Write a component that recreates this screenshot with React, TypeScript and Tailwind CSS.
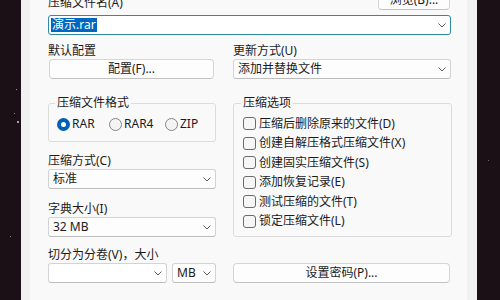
import React from "react";

function Chevron() {
  return (
    <svg width="8" height="5" viewBox="0 0 8 5" className="shrink-0">
      <path d="M0.5 0.5 L4 4 L7.5 0.5" fill="none" stroke="#5f5f5f" strokeWidth="1" />
    </svg>
  );
}

function Select({ value, className }: { value: string; className?: string }) {
  return (
    <div
      className={
        "h-[20px] border border-[#d3d3d3] border-b-[#bdbdbd] rounded-[3px] bg-[#fdfdfd] flex items-center justify-between pl-[4px] pr-[4px] " +
        (className ?? "")
      }
    >
      <span className="leading-[16px]">{value}</span>
      <Chevron />
    </div>
  );
}

function Button({ label, className }: { label: string; className?: string }) {
  return (
    <div
      className={
        "h-[20px] border border-[#d5d5d5] border-b-[#c2c2c2] rounded-[4px] bg-[#fdfdfd] flex items-center justify-center leading-[16px] " +
        (className ?? "")
      }
    >
      {label}
    </div>
  );
}

function Radio({ label, checked, className }: { label: string; checked?: boolean; className?: string }) {
  return (
    <div className={"flex items-center gap-[2px] " + (className ?? "")}>
      {checked ? (
        <div className="w-[13px] h-[13px] rounded-full bg-[#005fb8] flex items-center justify-center">
          <div className="w-[5px] h-[5px] rounded-full bg-white" />
        </div>
      ) : (
        <div className="w-[13px] h-[13px] rounded-full border border-[#858585] bg-[#f4f4f4]" />
      )}
      <span className="leading-[16px]">{label}</span>
    </div>
  );
}

function Check({ label }: { label: string }) {
  return (
    <div className="h-[19.5px] flex items-center gap-[3px]">
      <div className="w-[13px] h-[13px] rounded-[3px] border border-[#6b6b6b] bg-[#f6f6f6]" />
      <span className="leading-[16px]">{label}</span>
    </div>
  );
}

export default function App() {
  const options = [
    "压缩后删除原来的文件(D)",
    "创建自解压格式压缩文件(X)",
    "创建固实压缩文件(S)",
    "添加恢复记录(E)",
    "测试压缩的文件(T)",
    "锁定压缩文件(L)",
  ];

  return (
    <div className="w-[500px] h-[300px] flex bg-[#1a1016] overflow-hidden relative text-[12px] text-[#1b1b1b] font-['Noto_Sans','Noto_Sans_CJK_SC',sans-serif]">
      {/* stars */}
      <div className="absolute left-[17px] top-[121px] w-[2px] h-[2px] rounded-full bg-[#d8d0d8]" />
      <div className="absolute left-[14px] top-[113px] w-[1px] h-[1px] bg-[#8a7f88]" />
      <div className="absolute left-[16px] top-[89px] w-[1px] h-[1px] bg-[#9a909a]" />
      <div className="absolute left-[10px] top-[236px] w-[1px] h-[1px] bg-[#8a7f88]" />
      <div className="absolute left-[488px] top-[160px] w-[1px] h-[1px] bg-[#6a5f68]" />

      <div className="w-[21px] shrink-0" />
      <div className="w-[456px] shrink-0 bg-[#f1f1f1] flex">
        <div className="ml-[9px] w-[437px] bg-[#f9f9f9] pl-[18px]">
          <div className="w-[403px]">
            {/* archive name */}
            <div className="-mt-[10px] h-[20px] flex items-end justify-between">
              <span className="leading-[16px] -mb-[1px]">压缩文件名(A)</span>
              <Button label="浏览(B)..." className="w-[72px] mr-[1px]" />
            </div>
            <div className="mt-[5px] h-[20px] border border-[#2f8aa3] rounded-[3px] bg-white flex items-center justify-between pl-[2px] pr-[4px]">
              <span className="bg-[#0067c0] text-white leading-[14px] px-[1px]">演示.rar</span>
              <Chevron />
            </div>

            <div className="mt-[8px] flex gap-[17px]">
              {/* left column */}
              <div className="w-[168px] flex flex-col">
                <span className="leading-[16px]">默认配置</span>
                <Button label="配置(F)..." className="w-[165px] ml-[1px]" />

                <fieldset className="mt-[16px] border border-[#dcdcdc] rounded-[3px] pl-[8px] pb-[9px]">
                  <legend className="ml-[-2px] px-[2px] leading-[16px]">压缩文件格式</legend>
                  <div className="mt-[5px] h-[16px] flex items-center">
                    <Radio label="RAR" checked className="w-[52px]" />
                    <Radio label="RAR4" className="w-[56px]" />
                    <Radio label="ZIP" />
                  </div>
                </fieldset>

                <span className="mt-[11px] leading-[16px]">压缩方式(C)</span>
                <Select value="标准" />

                <span className="mt-[12px] leading-[16px]">字典大小(I)</span>
                <Select value="32 MB" />

                <span className="mt-[10px] leading-[16px]">切分为分卷(V)，大小</span>
                <div className="flex gap-[5px]">
                  <Select value="" className="w-[119px] bg-white border-[#c4c4c4] border-b-[#8f8f8f]" />
                  <Select value="MB" className="w-[44px] pl-[3px]" />
                </div>
              </div>

              {/* right column */}
              <div className="w-[218px] flex flex-col">
                <span className="leading-[16px]">更新方式(U)</span>
                <Select value="添加并替换文件" />

                <fieldset className="mt-[16px] w-[219px] border border-[#dcdcdc] rounded-[3px] pl-[9px] pb-[5px]">
                  <legend className="ml-[-2px] px-[2px] leading-[16px]">压缩选项</legend>
                  <div className="mt-[3px] flex flex-col">
                    {options.map((o) => (
                      <Check key={o} label={o} />
                    ))}
                  </div>
                </fieldset>

                <Button label="设置密码(P)..." className="mt-[26px] w-[217px]" />
              </div>
            </div>
          </div>
        </div>
      </div>
    </div>
  );
}
